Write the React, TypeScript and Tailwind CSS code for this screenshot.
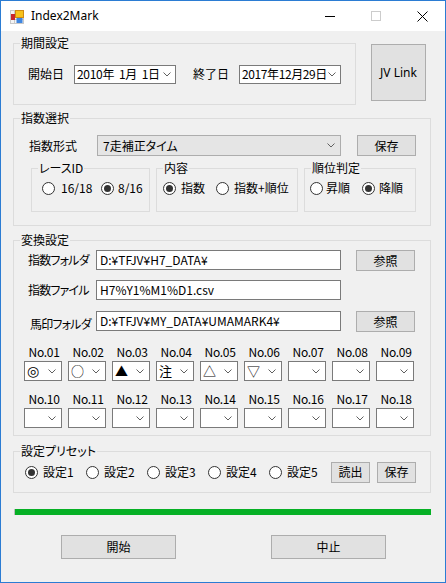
import React from "react";

const Chevron = () => (
  <svg width="8" height="5" viewBox="0 0 8 5" className="shrink-0">
    <path d="M0.5 0.5 L4 4 L7.5 0.5" fill="none" stroke="#606060" strokeWidth="1" />
  </svg>
);

function Group({
  label,
  className,
  children,
}: {
  label: string;
  className: string;
  children?: React.ReactNode;
}) {
  return (
    <div className={"relative border border-[#dcdcdc] " + className}>
      <span className="absolute left-[6px] top-[-8px] px-[1px] bg-[#f0f0f0] leading-[14px] text-[12px] whitespace-nowrap">
        {label}
      </span>
      {children}
    </div>
  );
}

function Radio({
  checked,
  label,
  className,
  gapClass,
}: {
  checked?: boolean;
  label: string;
  className: string;
  gapClass: string;
}) {
  return (
    <div className={"flex items-center shrink-0 " + className}>
      <div className="w-[13px] h-[13px] rounded-full border border-[#333333] bg-white flex items-center justify-center shrink-0">
        {checked && <div className="w-[7px] h-[7px] rounded-full bg-[#333333]" />}
      </div>
      <span className={"leading-[14px] whitespace-nowrap " + gapClass}>{label}</span>
    </div>
  );
}

function Btn({ label, className }: { label: string; className: string }) {
  return (
    <div
      className={
        "bg-[#e1e1e1] border border-[#adadad] flex items-center justify-center leading-[14px] shrink-0 whitespace-nowrap " +
        className
      }
    >
      {label}
    </div>
  );
}

const marks = ["◎", "○", "▲", "注", "△", "▽", "", "", ""];

function MarkCell({ no, mark }: { no: string; mark: string }) {
  return (
    <div className="w-[38px] flex flex-col items-center shrink-0">
      <div className="h-[12px] leading-[12px] whitespace-nowrap pl-[2px] tracking-[-0.3px]">No.{no}</div>
      <div className="mt-[3px] w-[38px] h-[20px] border border-[#7a7a7a] bg-white flex items-center justify-between pl-[2px] pr-[5px]">
        <span
          className={
            "leading-[14px] " +
            (mark === "◎" ? "text-[14px] font-['DejaVu_Sans',sans-serif]" : "text-[13px]")
          }
        >
          {mark}
        </span>
        <Chevron />
      </div>
    </div>
  );
}

export default function App() {
  const row1 = ["01", "02", "03", "04", "05", "06", "07", "08", "09"];
  const row2 = ["10", "11", "12", "13", "14", "15", "16", "17", "18"];
  return (
    <div className="w-[446px] h-[583px] border border-[#2b7cd3] bg-[#f0f0f0] flex flex-col text-[12px] text-black font-['Noto_Sans_CJK_JP','Noto_Sans',sans-serif] [font-feature-settings:'palt'] overflow-hidden">
      {/* Title bar */}
      <div className="h-[30px] bg-white flex items-center shrink-0">
        <div className="ml-[9px] mt-[1px]">
          <svg width="14" height="14" viewBox="0 0 14 14">
            <rect x="0.5" y="0.5" width="13" height="13" fill="#f4f4f4" stroke="#c8c8c8" />
            <line x1="0.5" y1="4.5" x2="13.5" y2="4.5" stroke="#c8c8c8" />
            <line x1="0.5" y1="9.5" x2="13.5" y2="9.5" stroke="#c8c8c8" />
            <line x1="4.5" y1="0.5" x2="4.5" y2="13.5" stroke="#c8c8c8" />
            <rect x="1" y="4" width="4" height="6" fill="#c8262c" />
            <rect x="5.5" y="0.5" width="8" height="7" fill="#f7c21a" stroke="#d08a10" />
            <rect x="6.5" y="8" width="6" height="5" fill="#3f86e0" />
          </svg>
        </div>
        <span className="ml-[7px] font-['Noto_Sans',sans-serif] text-[12px] leading-[16px] text-black">
          Index2Mark
        </span>
        <div className="ml-auto flex h-full">
          <div className="w-[46px] h-full flex items-center justify-center">
            <svg width="10" height="10" viewBox="0 0 10 10">
              <line x1="0" y1="5.5" x2="10" y2="5.5" stroke="#000" strokeWidth="1" />
            </svg>
          </div>
          <div className="w-[46px] h-full flex items-center justify-center">
            <svg width="10" height="10" viewBox="0 0 10 10">
              <rect x="0.5" y="0.5" width="9" height="9" fill="none" stroke="#cccccc" strokeWidth="1" />
            </svg>
          </div>
          <div className="w-[46px] h-full flex items-center justify-center">
            <svg width="11" height="11" viewBox="0 0 11 11">
              <path d="M0.5 0.5 L10.5 10.5 M10.5 0.5 L0.5 10.5" stroke="#000" strokeWidth="1" />
            </svg>
          </div>
        </div>
      </div>

      {/* Body */}
      <div className="flex-1 pl-[12px] flex flex-col">
        {/* 期間設定 row */}
        <div className="mt-[12px] flex items-start">
          <Group label="期間設定" className="w-[343px] h-[62px]">
            <div className="h-full flex items-center pl-[14px]">
              <span className="w-[46px] leading-[14px] whitespace-nowrap">開始日</span>
              <div className="w-[102px] h-[19px] border border-[#7a7a7a] bg-white flex items-center justify-between pl-[2px] pr-[4px]">
                <span className="leading-[14px] whitespace-pre tracking-[-0.3px]">2010年  1月  1日</span>
                <Chevron />
              </div>
              <span className="ml-[17px] w-[46px] leading-[14px] whitespace-nowrap">終了日</span>
              <div className="w-[102px] h-[19px] border border-[#7a7a7a] bg-white flex items-center justify-between pl-[2px] pr-[4px]">
                <span className="leading-[14px] whitespace-pre tracking-[-0.4px]">2017年12月29日</span>
                <Chevron />
              </div>
            </div>
          </Group>
          <Btn label="JV Link" className="ml-[15px] mt-[1px] w-[55px] h-[57px] font-['Noto_Sans',sans-serif]" />
        </div>

        {/* 指数選択 */}
        <Group label="指数選択" className="mt-[13px] w-[418px] h-[108px]">
          <div className="pt-[16px] pl-[15px] flex flex-col">
            <div className="flex items-center h-[21px]">
              <span className="w-[68px] leading-[14px] whitespace-nowrap">指数形式</span>
              <div className="w-[244px] h-[21px] border border-[#adadad] bg-[#e5e5e5] flex items-center justify-between pl-[5px] pr-[5px]">
                <span className="leading-[14px]">7走補正タイム</span>
                <Chevron />
              </div>
              <Btn label="保存" className="ml-[16px] w-[59px] h-[21px]" />
            </div>
            <div className="mt-[12px] pl-[2px] flex gap-[6px]">
              <Group label="レースID" className="w-[119px] h-[44px]">
                <div className="flex pt-[12px]">
                  <Radio label="16/18" className="ml-[10px] w-[59px]" gapClass="ml-[6px]" />
                  <Radio label="8/16" checked className="" gapClass="ml-[4px]" />
                </div>
              </Group>
              <Group label="内容" className="w-[142px] h-[44px]">
                <div className="flex pt-[12px]">
                  <Radio label="指数" checked className="ml-[6px] w-[53px]" gapClass="ml-[5px]" />
                  <Radio label="指数+順位" className="" gapClass="ml-[5px]" />
                </div>
              </Group>
              <Group label="順位判定" className="w-[112px] h-[44px]">
                <div className="flex pt-[12px]">
                  <Radio label="昇順" className="ml-[5px] w-[52px]" gapClass="ml-[3px]" />
                  <Radio label="降順" checked className="" gapClass="ml-[4px]" />
                </div>
              </Group>
            </div>
          </div>
        </Group>

        {/* 変換設定 */}
        <Group label="変換設定" className="mt-[14px] w-[418px] h-[196px]">
          <div className="pt-[9px] pl-[10px] flex flex-col">
            <div className="flex items-start h-[21px]">
              <span className="ml-[4px] w-[68px] h-[20px] flex items-center leading-[14px] whitespace-nowrap tracking-[-0.8px]">指数フォルダ</span>
              <div className="w-[245px] h-[20px] border border-[#7a7a7a] bg-white flex items-center pl-[3px]">
                <span className="leading-[14px] whitespace-nowrap">D:¥TFJV¥H7_DATA¥</span>
              </div>
              <Btn label="参照" className="ml-[15px] w-[59px] h-[21px]" />
            </div>
            <div className="mt-[9px] flex items-start h-[21px]">
              <span className="ml-[4px] w-[68px] h-[20px] flex items-center leading-[14px] whitespace-nowrap tracking-[-0.8px]">指数ファイル</span>
              <div className="w-[245px] h-[20px] border border-[#7a7a7a] bg-white flex items-center pl-[3px]">
                <span className="leading-[14px] whitespace-nowrap">H7%Y1%M1%D1.csv</span>
              </div>
            </div>
            <div className="mt-[10px] flex items-start h-[21px]">
              <span className="ml-[6px] w-[66px] h-[20px] pt-[6px] flex items-center leading-[14px] whitespace-nowrap tracking-[-0.8px]">馬印フォルダ</span>
              <div className="w-[245px] h-[20px] border border-[#7a7a7a] bg-white flex items-center pl-[3px]">
                <span className="leading-[14px] whitespace-nowrap">D:¥TFJV¥MY_DATA¥UMAMARK4¥</span>
              </div>
              <Btn label="参照" className="ml-[15px] w-[59px] h-[21px]" />
            </div>
            <div className="mt-[14px] flex gap-[6px]">
              {row1.map((n, i) => (
                <MarkCell key={n} no={n} mark={marks[i]} />
              ))}
            </div>
            <div className="mt-[12px] flex gap-[6px]">
              {row2.map((n) => (
                <MarkCell key={n} no={n} mark="" />
              ))}
            </div>
          </div>
        </Group>

        {/* 設定プリセット */}
        <Group label="設定プリセット" className="mt-[15px] w-[418px] h-[42px]">
          <div className="h-full flex items-center pl-[11px]">
            <Radio label="設定1" checked className="w-[61px]" gapClass="ml-[5px]" />
            <Radio label="設定2" className="w-[61px]" gapClass="ml-[5px]" />
            <Radio label="設定3" className="w-[61px]" gapClass="ml-[5px]" />
            <Radio label="設定4" className="w-[61px]" gapClass="ml-[5px]" />
            <Radio label="設定5" className="w-[61px]" gapClass="ml-[5px]" />
            <Btn label="読出" className="ml-[1px] w-[39px] h-[21px]" />
            <Btn label="保存" className="ml-[7px] w-[39px] h-[21px]" />
          </div>
        </Group>

        {/* progress */}
        <div className="mt-[16px] ml-[1px] w-[417px] h-[6px] bg-[#06b025] border-l border-[#bcbcbc]" />

        {/* bottom buttons */}
        <div className="mt-[20px] flex">
          <Btn label="開始" className="ml-[48px] w-[115px] h-[24px]" />
          <Btn label="中止" className="ml-[95px] w-[115px] h-[24px]" />
        </div>
      </div>
    </div>
  );
}
